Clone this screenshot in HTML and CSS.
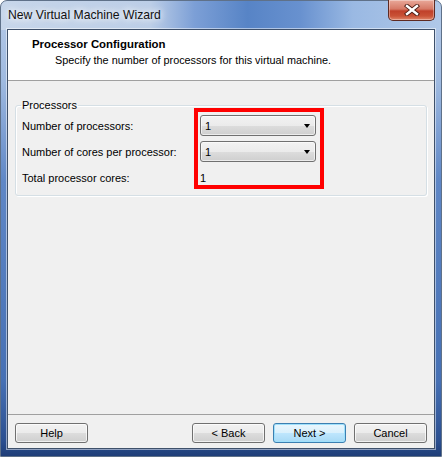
FILE: index.html
```html
<!DOCTYPE html>
<html lang="en">
<head>
  <meta charset="UTF-8" />
  <meta name="viewport" content="width=device-width, initial-scale=1.0" />
  <title>New Virtual Machine Wizard</title>
  <link rel="stylesheet" href="styles.css">
</head>
<body>
  <div class="window">
    <div class="titlebar">
      <span class="title">New Virtual Machine Wizard</span>
      <button class="close" aria-label="Close">
        <svg width="16" height="12" viewBox="0 0 16 12">
          <path d="M3 2 L13 10 M13 2 L3 10" stroke="#4a1a12" stroke-width="4.2" stroke-linecap="square" />
          <path d="M3 2 L13 10 M13 2 L3 10" stroke="#ffffff" stroke-width="2.4" stroke-linecap="square" />
        </svg>
      </button>
    </div>

    <div class="client">
      <div class="header">
        <h1>Processor Configuration</h1>
        <p>Specify the number of processors for this virtual machine.</p>
      </div>

      <div class="content">
        <fieldset class="group">
          <legend>Processors</legend>
          <div class="rows">
            <label>Number of processors:</label>
            <div class="combo"><span>1</span><i class="arrow"></i></div>

            <label>Number of cores per processor:</label>
            <div class="combo"><span>1</span><i class="arrow"></i></div>

            <label>Total processor cores:</label>
            <div class="value">1</div>

            <!-- red annotation box drawn over the controls -->
            <div class="highlight"></div>
          </div>
        </fieldset>
      </div>

      <div class="footer">
        <button class="btn">Help</button>
        <span class="spacer"></span>
        <button class="btn">&lt; Back</button>
        <button class="btn default">Next &gt;</button>
        <button class="btn">Cancel</button>
      </div>
    </div>
  </div>
</body>
</html>
```

FILE: styles.css
```css
body {
  margin: 0;
  background: #ffffff;
  font-family: "Liberation Sans", Arial, sans-serif;
  font-size: 11px;
  color: #000000;
}
.window {
  box-sizing: border-box;
  width: 442px;
  height: 457px;
  display: flex;
  flex-direction: column;
  padding: 0 6px 7px 6px;
  border: 1px solid #5f7189;
  border-radius: 7px 7px 0 0;
  background:
    linear-gradient(to right, #c7d6ea 0, #bccee7 34%, #7c9fd6 44%, #5784c6 56%, #6891cf 68%, #9ab9e3 80%, #b0c8e8 100%) top / 100% 29px no-repeat,
    linear-gradient(to bottom, #b7cbe8 0, #9fbae0 80px, #5f87c6 180px, #4670b4 380px, #2b4f90 440px, #1f3e78 100%);
}
.titlebar {
  height: 28px;
  display: flex;
  align-items: flex-start;
}
.title {
  margin-top: 7px;
  padding: 0 1px;
  font-size: 12.2px;
  color: #111111;
  text-shadow: 0 0 6px #ffffff, 0 0 10px #ffffff;
}
.close {
  margin-left: auto;
  margin-top: -1px;
  width: 47px;
  height: 21px;
  padding: 0;
  display: flex;
  align-items: center;
  justify-content: center;
  border: 1px solid #5e2a22;
  border-top: none;
  border-radius: 0 0 5px 5px;
  background: linear-gradient(to bottom, #e9a99a 0, #d67966 45%, #c0402a 55%, #c95236 80%, #e0866a 100%);
  box-shadow: inset 0 0 0 1px rgba(255, 255, 255, 0.35);
}
.client {
  flex: 1;
  display: flex;
  flex-direction: column;
  border: 1px solid #3e506a;
  background: #f0f0f0;
  box-shadow: 0 0 0 1px rgba(255, 255, 255, 0.5);
}
.header {
  height: 51px;
  padding: 8px 0 0 24px;
  box-sizing: border-box;
  background: #ffffff;
  border-bottom: 1px solid #a0a0a0;
}
.header h1 {
  margin: 0;
  font-size: 11.4px;
  line-height: 13px;
  font-weight: bold;
}
.header p {
  margin: 3px 0 0 23px;
  font-size: 10.85px;
  line-height: 13px;
}
.content {
  flex: 1;
  padding: 18px 7px 0 7px;
}
.group {
  margin: 0;
  padding: 3px 6px 7px 6px;
  border: 1px solid #d5dfe5;
  border-radius: 3px;
  box-shadow: inset 1px 1px 0 #ffffff, 1px 1px 0 #ffffff;
}
.group legend {
  padding: 0 1px;
  margin-left: -1px;
  line-height: 13px;
}
.rows {
  position: relative;
  display: grid;
  grid-template-columns: 178px 116px;
  grid-auto-rows: 21px;
  row-gap: 5px;
  align-items: center;
}
.combo {
  box-sizing: border-box;
  height: 21px;
  display: flex;
  align-items: center;
  padding: 0 5px 0 4px;
  border: 1px solid #707070;
  border-radius: 3px;
  background: linear-gradient(to bottom, #f2f2f2 0, #ebebeb 50%, #dddddd 51%, #cfcfcf 100%);
  box-shadow: inset 0 0 0 1px rgba(255, 255, 255, 0.6);
}
.combo span {
  flex: 1;
}
.arrow {
  width: 0;
  height: 0;
  border-left: 3.5px solid transparent;
  border-right: 3.5px solid transparent;
  border-top: 4px solid #000000;
}
.highlight {
  position: absolute;
  left: 172px;
  top: -7px;
  width: 130px;
  height: 81px;
  box-sizing: border-box;
  border: 4px solid #ff0000;
  pointer-events: none;
}
.footer {
  display: flex;
  gap: 8px;
  padding: 8px 7px 5px 7px;
  border-top: 1px solid #a0a0a0;
}
.spacer {
  flex: 1;
}
.btn {
  width: 73px;
  height: 20px;
  padding: 0;
  font-family: inherit;
  font-size: 11px;
  color: #000000;
  border: 1px solid #707070;
  border-radius: 3px;
  background: linear-gradient(to bottom, #f2f2f2 0, #ebebeb 50%, #dddddd 51%, #cfcfcf 100%);
  box-shadow: inset 0 0 0 1px rgba(255, 255, 255, 0.7);
}
.btn.default {
  border-color: #3c7fb1;
  background: linear-gradient(to bottom, #eaf6fd 0, #d9f0fc 50%, #bee6fd 51%, #a7d9f5 100%);
  box-shadow: inset 0 0 0 1px #9fe0fb;
}
```
